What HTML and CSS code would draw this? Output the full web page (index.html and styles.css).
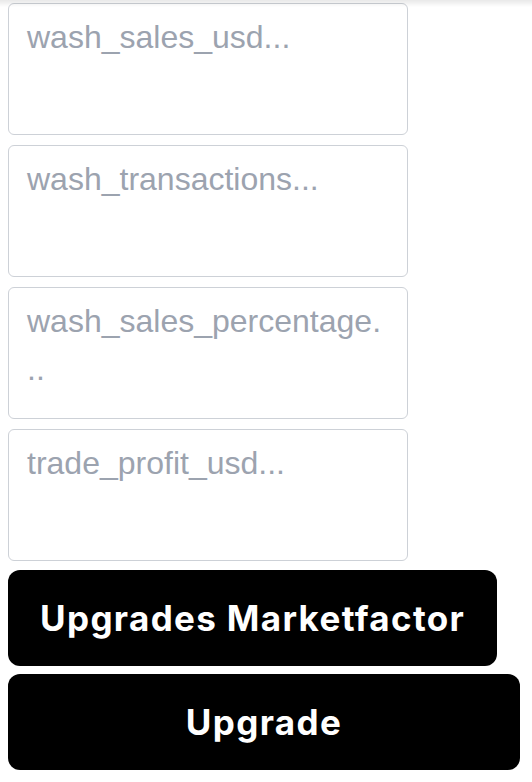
FILE: index.html
```html
<!DOCTYPE html>
<html lang="en">
<head>
<meta charset="utf-8">
<title>Marketfactor</title>
<link rel="stylesheet" href="styles.css">
</head>
<body>
<div class="topshade"></div>
<main class="page">
  <form class="form">
    <textarea class="field" placeholder="wash_sales_usd..."></textarea>
    <textarea class="field" placeholder="wash_transactions..."></textarea>
    <textarea class="field" placeholder="wash_sales_percentage..."></textarea>
    <textarea class="field" placeholder="trade_profit_usd..."></textarea>
    <div class="actions">
      <button type="button" class="btn">Upgrades Marketfactor</button>
      <button type="button" class="btn btn-full">Upgrade</button>
    </div>
  </form>
</main>
</body>
</html>
```

FILE: styles.css
```css
* { box-sizing: border-box; }

html, body {
  margin: 0;
  padding: 0;
  background: #ffffff;
}

body {
  font-family: Inter, "Liberation Sans", Arial, sans-serif;
  color: #000;
}

.topshade {
  position: fixed;
  top: 0;
  left: 0;
  right: 0;
  height: 7px;
  background: linear-gradient(to bottom, rgba(0,0,0,0.09), rgba(0,0,0,0));
  pointer-events: none;
  z-index: 5;
}

.page {
  padding: 3px 8px 0 8px;
  width: 528px;
}

.form {
  display: flex;
  flex-direction: column;
  gap: 10px;
}

.field {
  display: block;
  width: 400px;
  height: 132px;
  margin: 0;
  padding: 9px 22px 9px 18px;
  border: 1px solid #cdd1d7;
  border-radius: 6px;
  font-family: "Liberation Sans", Arial, sans-serif;
  font-size: 32px;
  line-height: 48px;
  color: #111827;
  resize: none;
  outline: none;
  background: #fff;
}

.field::placeholder {
  color: #9ca3af;
  opacity: 1;
}

.actions {
  display: flex;
  flex-direction: column;
  align-items: flex-start;
  gap: 8px;
  margin-top: -1px;
}

.btn {
  display: block;
  margin: 0;
  padding: 24px 32px;
  border: none;
  border-radius: 12px;
  background: #000;
  color: #fff;
  font-family: Inter, "Liberation Sans", Arial, sans-serif;
  font-weight: 700;
  font-size: 35px;
  letter-spacing: 1.35px;
  line-height: 48px;
  white-space: nowrap;
  cursor: pointer;
}

.btn-full {
  width: 512px;
  text-align: center;
}
```
